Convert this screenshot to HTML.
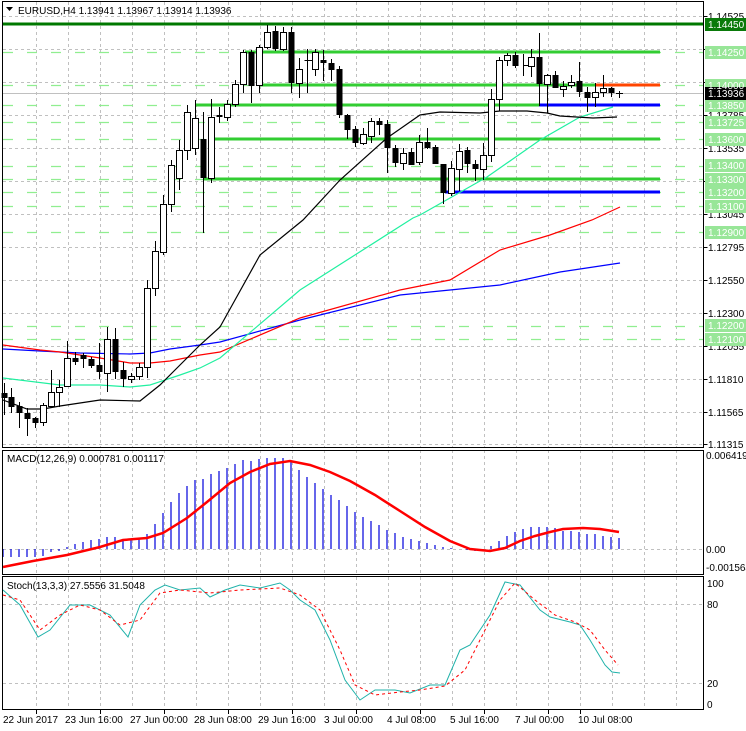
<!DOCTYPE html>
<html><head><meta charset="utf-8"><style>
html,body{margin:0;padding:0;background:#fff;}
svg{display:block;font-family:"Liberation Sans",sans-serif;}
</style></head><body>
<svg width="746" height="731" viewBox="0 0 746 731" xmlns="http://www.w3.org/2000/svg">
<rect width="746" height="731" fill="#fff"/>
<g stroke="#c0c0c0" stroke-dasharray="3,3" stroke-width="1">
<path d="M36.5 2V447M68.5 2V447M100.5 2V447M132.5 2V447M164.5 2V447M196.5 2V447M228.5 2V447M260.5 2V447M292.5 2V447M324.5 2V447M356.5 2V447M388.5 2V447M420.5 2V447M452.5 2V447M484.5 2V447M516.5 2V447M548.5 2V447M580.5 2V447M612.5 2V447M644.5 2V447M676.5 2V447"/>
<path d="M36.5 450V574M68.5 450V574M100.5 450V574M132.5 450V574M164.5 450V574M196.5 450V574M228.5 450V574M260.5 450V574M292.5 450V574M324.5 450V574M356.5 450V574M388.5 450V574M420.5 450V574M452.5 450V574M484.5 450V574M516.5 450V574M548.5 450V574M580.5 450V574M612.5 450V574M644.5 450V574M676.5 450V574"/>
<path d="M36.5 577V709M68.5 577V709M100.5 577V709M132.5 577V709M164.5 577V709M196.5 577V709M228.5 577V709M260.5 577V709M292.5 577V709M324.5 577V709M356.5 577V709M388.5 577V709M420.5 577V709M452.5 577V709M484.5 577V709M516.5 577V709M548.5 577V709M580.5 577V709M612.5 577V709M644.5 577V709M676.5 577V709"/>
<path d="M3 16.5H703M3 49.5H703M3 82.5H703M3 115.5H703M3 148.5H703M3 181.5H703M3 214.5H703M3 247.5H703M3 280.5H703M3 313.5H703M3 346.5H703M3 379.5H703M3 412.5H703M3 444.5H703"/>
<path d="M3 549.5H703M3 604.5H703M3 683.5H703"/>
</g>
<g stroke="#90ee90" stroke-dasharray="10,14" stroke-width="1.2">
<path d="M3 52.5H703M3 85.5H703M3 105.5H703M3 122.5H703M3 139.5H703M3 166.5H703M3 179.5H703M3 192.5H703M3 206.5H703M3 232.5H703M3 326.5H703M3 339.5H703"/>
</g>
<line x1="3" y1="93.5" x2="703" y2="93.5" stroke="#c0c0c0"/>
<line x1="3" y1="24" x2="703" y2="24" stroke="#007800" stroke-width="3"/>
<g stroke="#32cd32" stroke-width="3">
<line x1="245" y1="52" x2="660" y2="52"/>
<line x1="260" y1="85" x2="660" y2="85"/>
<line x1="195" y1="105" x2="540" y2="105"/>
<line x1="208" y1="139" x2="660" y2="139"/>
<line x1="203" y1="179" x2="660" y2="179"/>
</g>
<line x1="595" y1="85" x2="660" y2="85" stroke="#ff4500" stroke-width="3"/>
<line x1="539" y1="105" x2="660" y2="105" stroke="#0000ff" stroke-width="3"/>
<line x1="445" y1="192" x2="660" y2="192" stroke="#0000ff" stroke-width="3"/>
<g fill="none" stroke-width="1.2">
<polyline stroke="#0000ff" points="3,349 40,351 80,353 130,354 150,353 170,349 200,345 220,342 300,320 400,295 500,285 560,272 620,263"/>
<polyline stroke="#ff0000" points="3,345 40,350 60,352 100,358 130,363 150,363 170,361 200,355 220,352 300,318 400,290 450,280 500,250 550,235 592,220 620,207"/>
<polyline stroke="#20f0a0" points="3,378 60,385 100,385 130,387 150,385 165,380 180,375 200,368 220,358 300,290 413,218 420,215 487,177 540,140 580,117 613,107"/>
<polyline stroke="#000" points="3,400 27,409 43,409 60,406 80,403 100,400 140,401 160,385 175,370 200,345 220,327 235,300 260,255 303,220 340,180 387,138 420,115 440,112 480,113 500,111 527,111 547,113 560,116 593,118 617,117"/>
</g>
<g stroke="#000" stroke-width="1">
<path d="M4.5 383V415M11.5 388V413M19.5 402V428M27.5 408V436M35.5 417V428M43.5 403V426M51.5 370V407M59.5 380V407M67.5 341V387M75.5 352V365M83.5 353V368M91.5 357V368M99.5 343V379M107.5 327V392M115.5 328V379M123.5 362V387M131.5 373V383M139.5 363V380M147.5 280V378M155.5 241V296M163.5 195V255M171.5 160V212M179.5 140V190M187.5 105V160M195.5 100V155M203.5 112V233M211.5 99V183M219.5 107V123M227.5 100V121M235.5 80V107M243.5 50V93M251.5 50V103M259.5 45V93M267.5 25V49M275.5 26V51M283.5 27V51M291.5 27V93M299.5 58V98M307.5 49V93M315.5 49V76M323.5 50V81M331.5 59V81M339.5 66V118M347.5 114V139M355.5 126V147M363.5 128V145M371.5 118V143M379.5 118V135M387.5 120V173M395.5 145V167M403.5 148V170M411.5 148V165M419.5 135V165M427.5 128V149M435.5 145V164M443.5 164V204M451.5 161V196M459.5 144V191M467.5 147V173M475.5 160V181M483.5 143V180M491.5 89V162M499.5 57V111M507.5 53V66M515.5 52V68M523.5 54V76M531.5 49V77M539.5 33V106M547.5 74V113M555.5 71V88M563.5 81V97M571.5 75V88M579.5 62V97M587.5 87V112M595.5 83V107M603.5 75V97M611.5 87V97M619.5 91V98M307 60.5H312M523 65.5H528M616 93.5H623"/>
</g>
<g fill="#000">
<rect x="1.5" y="393" width="6" height="5"/><rect x="8.5" y="397" width="6" height="10"/><rect x="16.5" y="406" width="6" height="7"/><rect x="24.5" y="413" width="6" height="6"/><rect x="32.5" y="418" width="6" height="5"/>
<rect x="72.5" y="358" width="6" height="4"/><rect x="80.5" y="355" width="6" height="4"/><rect x="88.5" y="359" width="6" height="7"/><rect x="96.5" y="365" width="6" height="7"/><rect x="112.5" y="339" width="6" height="33"/><rect x="120.5" y="370" width="6" height="9"/>
<rect x="200.5" y="139" width="6" height="39"/><rect x="216.5" y="115" width="6" height="2"/><rect x="248.5" y="52" width="6" height="34"/><rect x="272.5" y="31" width="6" height="18"/><rect x="288.5" y="32" width="6" height="51"/><rect x="304.5" y="60" width="6" height="1"/><rect x="320.5" y="60" width="6" height="3"/><rect x="328.5" y="63" width="6" height="7"/><rect x="336.5" y="69" width="6" height="46"/><rect x="344.5" y="115" width="6" height="15"/><rect x="352.5" y="129" width="6" height="14"/><rect x="376.5" y="121" width="6" height="4"/><rect x="384.5" y="124" width="6" height="24"/><rect x="392.5" y="148" width="6" height="15"/><rect x="408.5" y="152" width="6" height="13"/><rect x="424.5" y="142" width="6" height="6"/><rect x="432.5" y="147" width="6" height="17"/><rect x="440.5" y="164" width="6" height="29"/><rect x="464.5" y="150" width="6" height="14"/><rect x="472.5" y="164" width="6" height="5"/><rect x="512.5" y="55" width="6" height="11"/><rect x="536.5" y="57" width="6" height="27"/><rect x="552.5" y="75" width="6" height="13"/><rect x="576.5" y="81" width="6" height="11"/><rect x="584.5" y="92" width="6" height="6"/><rect x="608.5" y="88" width="6" height="5"/>
</g>
<g fill="#fff" stroke="#000" stroke-width="1">
<rect x="40.5" y="405.5" width="6" height="17"/><rect x="48.5" y="392.5" width="6" height="14"/><rect x="56.5" y="387.5" width="6" height="5"/><rect x="64.5" y="358.5" width="6" height="28"/><rect x="104.5" y="339.5" width="6" height="34"/><rect x="128.5" y="376.5" width="6" height="3"/><rect x="136.5" y="367.5" width="6" height="9"/><rect x="144.5" y="288.5" width="6" height="79"/><rect x="152.5" y="251.5" width="6" height="37"/><rect x="160.5" y="204.5" width="6" height="48"/><rect x="168.5" y="165.5" width="6" height="39"/><rect x="176.5" y="150.5" width="6" height="28"/><rect x="184.5" y="112.5" width="6" height="38"/><rect x="192.5" y="118.5" width="6" height="30"/>
<rect x="208.5" y="117.5" width="6" height="61"/><rect x="224.5" y="104.5" width="6" height="13"/><rect x="232.5" y="84.5" width="6" height="20"/><rect x="240.5" y="52.5" width="6" height="32"/><rect x="256.5" y="47.5" width="6" height="38"/><rect x="264.5" y="32.5" width="6" height="15"/><rect x="280.5" y="32.5" width="6" height="17"/><rect x="296.5" y="69.5" width="6" height="14"/><rect x="312.5" y="52.5" width="6" height="17"/><rect x="360.5" y="134.5" width="6" height="9"/><rect x="368.5" y="121.5" width="6" height="15"/><rect x="400.5" y="153.5" width="6" height="10"/><rect x="416.5" y="142.5" width="6" height="20"/><rect x="448.5" y="168.5" width="6" height="25"/><rect x="456.5" y="151.5" width="6" height="18"/><rect x="480.5" y="155.5" width="6" height="14"/><rect x="488.5" y="99.5" width="6" height="56"/><rect x="496.5" y="60.5" width="6" height="39"/><rect x="504.5" y="55.5" width="6" height="5"/><rect x="528.5" y="57.5" width="6" height="9"/><rect x="544.5" y="75.5" width="6" height="9"/><rect x="560.5" y="86.5" width="6" height="3"/><rect x="568.5" y="82.5" width="6" height="3"/><rect x="592.5" y="92.5" width="6" height="5"/><rect x="600.5" y="88.5" width="6" height="4"/>
</g>
<path stroke="#0000dd" stroke-width="1.2" fill="none" d="M3 549V557M11 549V557M19 549V557M27 549V557M35 549V557M43 549V556M51 549V552M59 549V551M67 549V547M75 549V544M83 549V542M91 549V540M99 549V539M107 549V537M115 549V537M123 549V539M131 549V539M139 549V539M147 549V534M155 549V524M163 549V513M171 549V502M179 549V493M187 549V486M195 549V480M203 549V479M211 549V474M219 549V471M227 549V468M235 549V464M243 549V460M251 549V461M259 549V459M267 549V458M275 549V458M283 549V458M291 549V462M299 549V470M307 549V477M315 549V483M323 549V489M331 549V495M339 549V500M347 549V506M355 549V512M363 549V517M371 549V521M379 549V525M387 549V530M395 549V533M403 549V537M411 549V539M419 549V541M427 549V543M435 549V545M443 549V547M451 549V548M467 549V550M475 549V551M483 549V550M491 549V546M499 549V541M507 549V536M515 549V532M523 549V529M531 549V527M539 549V527M547 549V527M555 549V528M563 549V531M571 549V531M579 549V532M587 549V534M595 549V534M603 549V536M611 549V537M619 549V538"/>
<polyline fill="none" stroke="#ff0000" stroke-width="2.5" points="3,567 33,561 67,555 100,547 123,540 147,538 163,533 187,518 207,502 230,483 250,472 270,464 290,461 310,465 330,472 350,481 375,495 400,511 425,527 450,541 470,549 490,551 505,548 520,541 535,536 550,532 563,529 583,528 600,529 619,532"/>
<polyline fill="none" stroke="#20b2aa" stroke-width="1" points="3,590 20,605 38,637 50,630 70,605 90,605 110,615 128,637 140,605 155,590 165,585 180,590 200,588 210,597 225,590 240,585 260,588 280,583 290,590 300,600 315,610 330,640 345,680 360,700 375,690 395,690 410,693 430,685 445,685 460,650 470,645 490,615 505,582 520,585 540,610 550,617 570,622 580,625 590,640 605,665 612,672 620,673"/>
<polyline fill="none" stroke="#ff0000" stroke-width="1" stroke-dasharray="3,3" points="3,595 20,600 40,630 60,615 80,605 100,610 120,625 140,620 160,593 180,590 210,593 240,590 280,588 300,595 320,610 340,650 355,685 375,695 400,692 420,690 445,686 465,670 480,640 500,600 515,583 535,600 555,615 575,622 590,630 605,650 618,665"/>
<g fill="none" stroke="#000" stroke-width="1">
<rect x="2.5" y="1.5" width="701" height="446"/>
<rect x="2.5" y="450.5" width="701" height="124"/>
<rect x="2.5" y="576.5" width="701" height="133"/>
</g>
<path d="M703.5 16.5h4M703.5 49.5h4M703.5 82.5h4M703.5 115.5h4M703.5 148.5h4M703.5 181.5h4M703.5 214.5h4M703.5 247.5h4M703.5 280.5h4M703.5 313.5h4M703.5 346.5h4M703.5 379.5h4M703.5 412.5h4M703.5 444.5h4M36.5 710v4M100.5 710v4M164.5 710v4M228.5 710v4M292.5 710v4M356.5 710v4M420.5 710v4M484.5 710v4M548.5 710v4M580.5 710v4" stroke="#000"/>
<g font-size="10" fill="#000">
<text x="708" y="20">1.14525</text><text x="708" y="53">1.14285</text><text x="708" y="86">1.14045</text><text x="708" y="119">1.13785</text><text x="708" y="152">1.13535</text><text x="708" y="185">1.13300</text><text x="708" y="218">1.13045</text><text x="708" y="251">1.12795</text><text x="708" y="284">1.12550</text><text x="708" y="317">1.12300</text><text x="708" y="350">1.12055</text><text x="708" y="383">1.11810</text><text x="708" y="416">1.11565</text><text x="708" y="448">1.11315</text>
</g>
<g fill="#98e698">
<rect x="705" y="46" width="41" height="13"/><rect x="705" y="79" width="41" height="13"/><rect x="705" y="99" width="41" height="13"/><rect x="705" y="116" width="41" height="13"/><rect x="705" y="133" width="41" height="13"/><rect x="705" y="159" width="41" height="13"/><rect x="705" y="173" width="41" height="13"/><rect x="705" y="186" width="41" height="13"/><rect x="705" y="200" width="41" height="13"/><rect x="705" y="226" width="41" height="13"/><rect x="705" y="319" width="41" height="13"/><rect x="705" y="333" width="41" height="13"/>
</g>
<rect x="705" y="18" width="41" height="13" fill="#0a7a0a"/>
<rect x="705" y="87" width="41" height="13" fill="#000"/>
<g font-size="10" fill="#fff">
<text x="708" y="28">1.14450</text><text x="708" y="56">1.14250</text><text x="708" y="89">1.14000</text><text x="708" y="97">1.13936</text><text x="708" y="109">1.13850</text><text x="708" y="126">1.13725</text><text x="708" y="143">1.13600</text><text x="708" y="169">1.13400</text><text x="708" y="183">1.13300</text><text x="708" y="196">1.13200</text><text x="708" y="210">1.13100</text><text x="708" y="236">1.12900</text><text x="708" y="329">1.12200</text><text x="708" y="343">1.12100</text>
</g>
<g font-size="10" fill="#000">
<text x="706" y="459">0.006419</text><text x="706" y="553">0.00</text><text x="706" y="571">-0.001564</text>
<text x="707" y="587">100</text><text x="707" y="608">80</text><text x="707" y="687">20</text><text x="707" y="708">0</text>
<text x="7" y="462">MACD(12,26,9) 0.000781 0.001117</text>
<text x="7" y="589">Stoch(13,3,3) 27.5556 31.5048</text>
<text x="18" y="14">EURUSD,H4  1.13941 1.13967 1.13914 1.13936</text>
</g>
<path d="M6 7h7l-3.5 4z" fill="#000"/>
<g font-size="10" fill="#000">
<text x="3" y="723">22 Jun 2017</text><text x="65" y="723">23 Jun 16:00</text><text x="130" y="723">27 Jun 00:00</text><text x="194" y="723">28 Jun 08:00</text><text x="258" y="723">29 Jun 16:00</text><text x="324" y="723">3 Jul 00:00</text><text x="387" y="723">4 Jul 08:00</text><text x="450" y="723">5 Jul 16:00</text><text x="515" y="723">7 Jul 00:00</text><text x="578" y="723">10 Jul 08:00</text>
</g>
</svg>
</body></html>
